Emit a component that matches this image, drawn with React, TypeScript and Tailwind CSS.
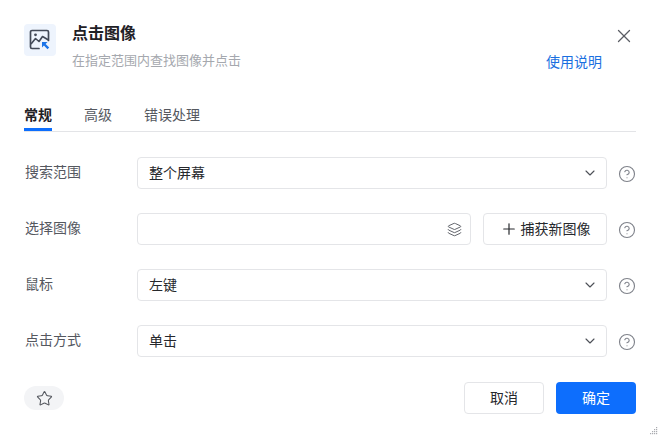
import React from "react";
import { ChevronDown, CircleHelp, Layers, Plus, Star, X } from "lucide-react";

const Help = () => (
    <CircleHelp size={18} strokeWidth={1.5} className="ml-[10.5px] mt-[1px] text-[#7f828a]" />
);

const SelectRow = ({ label, value }: { label: string; value: string }) => {
    return (
        <div className="flex items-center h-8">
            <div className="w-[113px] text-sm text-[#55585f] pl-px -mt-0.5">{label}</div>
            <div className="w-[470px] h-8 flex items-center justify-between border border-[#e4e5e8] rounded pl-[11px] pr-2 text-sm text-[#26282c]">
                <span>{value}</span>
                <ChevronDown size={16} strokeWidth={1.7} className="text-[#4d5057] -mt-px" />
            </div>
            <Help />
        </div>
    );
};

const ImageRow = () => {
    return (
        <div className="flex items-center h-8">
            <div className="w-[113px] text-sm text-[#55585f] pl-px -mt-0.5">选择图像</div>
            <div className="w-[334px] h-8 flex items-center justify-end border border-[#e4e5e8] rounded pr-2">
                <Layers size={15} strokeWidth={1.6} className="text-[#63666d]" />
            </div>
            <div className="w-[124px] h-8 ml-3 flex items-center justify-center gap-[3px] border border-[#e4e5e8] rounded text-sm text-[#26282c]">
                <Plus size={18} strokeWidth={1.6} />
                <span>捕获新图像</span>
            </div>
            <Help />
        </div>
    );
};

export default function App() {
    return (
        <div
            className="w-[660px] h-[438px] bg-white relative overflow-hidden px-6"
            style={{ fontFamily: '"Liberation Sans", "Noto Sans CJK SC", sans-serif' }}
        >
            <div className="flex h-[92px] pt-6">
                <div className="w-8 h-8 rounded bg-[#eef4fd] flex items-center justify-center">
                    <svg width="22" height="22" viewBox="0 0 22 22" fill="none">
                        <path d="M10 19.500H3A1.500 1.500 0 0 1 1.500 18V3A1.500 1.500 0 0 1 3 1.500h15A1.500 1.500 0 0 1 19.500 3v8.500" stroke="#434a58" strokeWidth="1.7" strokeLinecap="round" />
                        <path d="M2 15l4.500-5.500 3.500 3 3.500-5 6 3.500" stroke="#434a58" strokeWidth="1.600" strokeLinejoin="round" />
                        <circle cx="6.500" cy="5.800" r="1.400" fill="#434a58" />
                        <path d="M13 13h5.500l-1.900 1.900L20.200 18.500 18.500 20.200l-3.600-3.600L13 18.500z" fill="#1a73e8" />
                    </svg>
                </div>
                <div className="ml-4 flex-1 -mt-[2px]">
                    <div className="text-base leading-[24px] font-semibold text-[#1f2126]">点击图像</div>
                    <div className="text-[13px] leading-[20px] mt-[5px] text-[#a5a8ae]">在指定范围内查找图像并点击</div>
                </div>
                <div className="flex flex-col items-end">
                    <X size={22} strokeWidth={1.4} className="mt-px mr-px text-[#5a5d64]" />
                    <div className="mt-[5px] mr-[34px] text-sm leading-5 text-[#1a6fe0] w-14 whitespace-nowrap">使用说明</div>
                </div>
            </div>

            <div className="flex gap-8 h-10 border-b border-[#e3e4e7] text-sm text-[#55585f] pt-[13px]">
                <div className="h-[26px] leading-5 font-semibold text-[#1f2126] border-b-[3px] border-[#0d6efd]">常规</div>
                <div className="leading-5">高级</div>
                <div className="leading-5">错误处理</div>
            </div>

            <div className="mt-[25px] flex flex-col gap-6">
                <SelectRow label="搜索范围" value="整个屏幕" />
                <ImageRow />
                <SelectRow label="鼠标" value="左键" />
                <SelectRow label="点击方式" value="单击" />
            </div>

            <div className="mt-[25px] flex items-center justify-between">
                <div className="w-10 h-6 rounded-full bg-[#f3f4f6] flex items-center justify-center">
                    <Star size={17} strokeWidth={1.5} className="text-[#53565d]" />
                </div>
                <div className="flex gap-3">
                    <div className="w-20 h-8 flex items-center justify-center border border-[#e4e5e8] rounded text-sm text-[#26282c]">取消</div>
                    <div className="w-20 h-8 flex items-center justify-center rounded bg-[#0d6efd] text-sm text-white">确定</div>
                </div>
            </div>

            <svg width="10" height="10" viewBox="0 0 10 10" className="absolute right-[1px] bottom-[2px]" fill="#a9abb0">
                <rect x="7" y="1" width="1.200" height="1.200" />
                <rect x="5" y="3" width="1.200" height="1.200" />
                <rect x="7" y="3" width="1.200" height="1.200" />
                <rect x="3" y="5" width="1.200" height="1.200" />
                <rect x="5" y="5" width="1.200" height="1.200" />
                <rect x="7" y="5" width="1.200" height="1.200" />
                <rect x="1" y="7" width="1.200" height="1.200" />
                <rect x="3" y="7" width="1.200" height="1.200" />
                <rect x="5" y="7" width="1.200" height="1.200" />
                <rect x="7" y="7" width="1.200" height="1.200" />
            </svg>
        </div>
    );
}
